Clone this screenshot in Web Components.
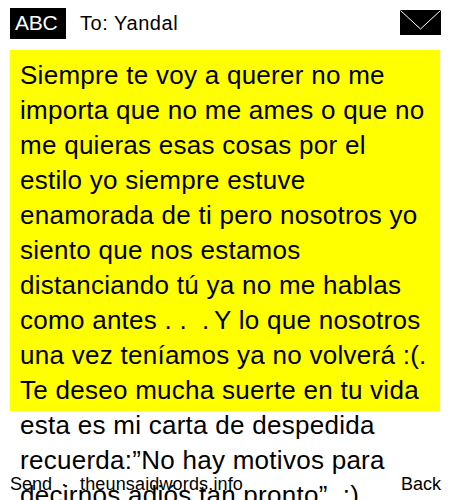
<!DOCTYPE html>
<html lang="es"><head><meta charset="utf-8"><title>Message</title>
<style>
html,body{margin:0;padding:0;height:500px;overflow:hidden;background:#fff}
body{font-family:"Liberation Sans",Arial,sans-serif;color:#000;position:relative}
</style></head><body>
<msg-screen>
  <msg-header slot="header" to="To: Yandal"></msg-header>
  <msg-body>Siempre te voy a querer no me<br>importa que no me ames o que no<br>me quieras esas cosas por el<br>estilo yo siempre estuve<br>enamorada de ti pero nosotros yo<br>siento que nos estamos<br>distanciando tú ya no me hablas<br>como antes . .&nbsp; . <span style="margin-left:-3px">Y lo que nosotros</span><br>una vez teníamos ya no volverá :(.<br>Te deseo mucha suerte en tu vida<br>esta es mi carta de despedida<br>recuerda:”No hay motivos para<br>decirnos adiós tan pronto”. :)</msg-body>
  <soft-keys slot="keys"></soft-keys>
</msg-screen>
<script>
class MsgScreen extends HTMLElement{constructor(){super();this.attachShadow({mode:'open'}).innerHTML=`<style>
:host{display:block;position:relative;width:450px;height:500px;overflow:hidden}
.keys{position:absolute;left:0;right:0;bottom:0}
</style><slot name="header"></slot><slot></slot><div class="keys"><slot name="keys"></slot></div>`}}
class MsgHeader extends HTMLElement{constructor(){super();this.attachShadow({mode:'open'}).innerHTML=`<style>
:host{display:flex;align-items:flex-start;box-sizing:border-box;height:50px;padding:8px 9px 0 10px}
.mode{box-sizing:border-box;width:56px;height:31px;padding-left:5px;background:#000;color:#fff;font-size:21px;letter-spacing:-.2px;line-height:30px}
.to{flex:1;margin-left:14px;font-size:20px;line-height:30px;letter-spacing:.55px}
svg{display:block;margin-top:2px}
</style><div class="mode">ABC</div><div class="to"></div>
<svg width="41" height="25" viewBox="0 0 41 25"><rect width="41" height="25" fill="#000"/><path d="M.5 .5L20.5 19L40.5 .5" fill="none" stroke="#fff" stroke-width="1"/></svg>`;
this.shadowRoot.querySelector('.to').textContent=this.getAttribute('to')}}
class MsgBody extends HTMLElement{constructor(){super();this.attachShadow({mode:'open'}).innerHTML=`<style>
:host{display:block;box-sizing:border-box;width:430px;height:361px;margin-left:10px;padding:8px 10px 0;background:#ff0;font-size:26px;letter-spacing:.27px;line-height:35px;white-space:nowrap}
</style><slot></slot>`}}
class SoftKeys extends HTMLElement{constructor(){super();this.attachShadow({mode:'open'}).innerHTML=`<style>
:host{display:flex;box-sizing:border-box;height:28px;padding:0 9px 0 10px;font-size:18px;line-height:24px}
.dot{margin-left:9px}.site{margin-left:13px;flex:1;letter-spacing:.15px}
</style><span>Send</span><span class="dot">·</span><span class="site">theunsaidwords.info</span><span>Back</span>`}}
customElements.define('msg-screen',MsgScreen);
customElements.define('msg-header',MsgHeader);
customElements.define('msg-body',MsgBody);
customElements.define('soft-keys',SoftKeys);
</script>
</body></html>
